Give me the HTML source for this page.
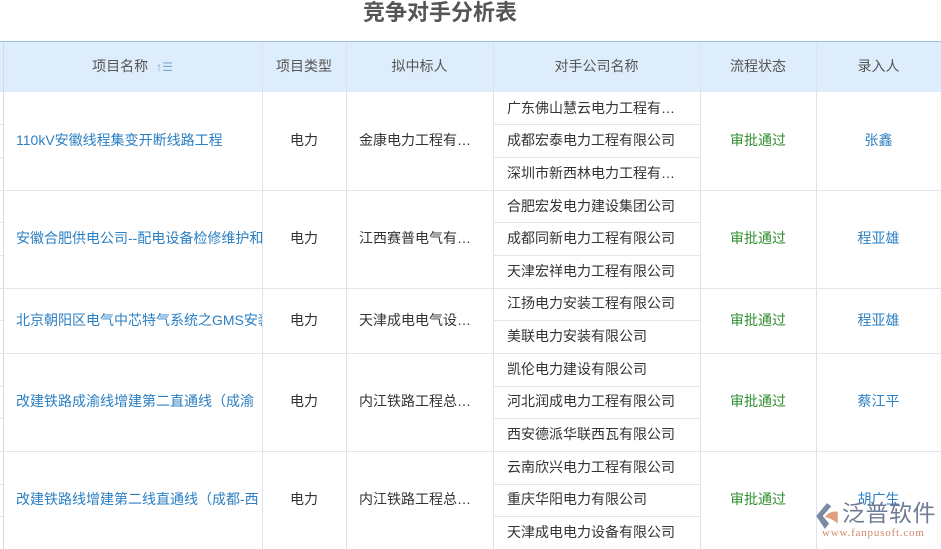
<!DOCTYPE html>
<html><head><meta charset="utf-8"><style>
*{margin:0;padding:0;box-sizing:border-box}
body{width:941px;height:549px;overflow:hidden;background:#fff;font-family:"Liberation Sans","Noto Sans CJK SC",sans-serif;font-size:14px;color:#333;position:relative}
.a{position:absolute}
.title{left:0;width:880px;top:0;text-align:center;font-size:22px;font-weight:bold;color:#555;line-height:26px}
.hdr{left:0;top:41px;width:941px;height:51px;background:#deedfb;border-top:1px solid #9cc0dd}
.hc{top:42px;height:50px;line-height:48px;text-align:center;color:#555}
.vl{width:1px;background:#dde3ea}
.hl{height:1px;background:#e3e6ea}
.c{text-align:center;white-space:nowrap;overflow:hidden}
.n{left:16px;width:246px;white-space:nowrap;overflow:hidden;color:#2b7fc3}
.co{left:507px;width:190px;white-space:nowrap;color:#333}
.g{color:#2f8f2f}.b{color:#2b7fc3}
.r{position:absolute;left:0;top:-2px;width:941px;height:549px}
</style></head><body>
<div class="a title">竞争对手分析表</div>
<div class="a hdr"></div>
<div class="a hc" style="left:3px;width:259px">项目名称 <span style="color:#7fa6cf;font-size:12px;margin-left:4px">↑☰</span></div>
<div class="a hc" style="left:262px;width:84px">项目类型</div>
<div class="a hc" style="left:346px;width:147px">拟中标人</div>
<div class="a hc" style="left:493px;width:207px">对手公司名称</div>
<div class="a hc" style="left:700px;width:116px">流程状态</div>
<div class="a hc" style="left:816px;width:125px">录入人</div>
<div class="a vl" style="left:3px;top:42px;height:507px;background:#cfdbe8"></div>
<div class="a vl" style="left:262px;top:42px;height:507px"></div>
<div class="a vl" style="left:346px;top:42px;height:507px"></div>
<div class="a vl" style="left:493px;top:42px;height:507px"></div>
<div class="a vl" style="left:700px;top:42px;height:507px"></div>
<div class="a vl" style="left:816px;top:42px;height:507px"></div>
<div class="a hl" style="left:0;width:941px;top:190px"></div>
<div class="a hl" style="left:0;width:941px;top:288px"></div>
<div class="a hl" style="left:0;width:941px;top:353px"></div>
<div class="a hl" style="left:0;width:941px;top:451px"></div>
<div class="a hl" style="left:493px;width:207px;top:124px"></div>
<div class="a hl" style="left:493px;width:207px;top:157px"></div>
<div class="a hl" style="left:493px;width:207px;top:222px"></div>
<div class="a hl" style="left:493px;width:207px;top:255px"></div>
<div class="a hl" style="left:493px;width:207px;top:320px"></div>
<div class="a hl" style="left:493px;width:207px;top:386px"></div>
<div class="a hl" style="left:493px;width:207px;top:418px"></div>
<div class="a hl" style="left:493px;width:207px;top:484px"></div>
<div class="a hl" style="left:493px;width:207px;top:516px"></div>
<div class="a hl" style="left:0;width:3px;top:124px"></div><div class="a hl" style="left:0;width:3px;top:157px"></div>
<div class="a hl" style="left:0;width:3px;top:222px"></div><div class="a hl" style="left:0;width:3px;top:255px"></div>
<div class="a hl" style="left:0;width:3px;top:320px"></div><div class="a hl" style="left:0;width:3px;top:386px"></div>
<div class="a hl" style="left:0;width:3px;top:418px"></div><div class="a hl" style="left:0;width:3px;top:484px"></div>
<div class="a hl" style="left:0;width:3px;top:516px"></div>

<div class="r">
<div class="a n" style="top:132px">110kV安徽线程集变开断线路工程</div>
<div class="a c" style="left:262px;width:84px;top:132px">电力</div>
<div class="a" style="left:359px;top:132px">金康电力工程有…</div>
<div class="a co" style="top:100px">广东佛山慧云电力工程有…</div>
<div class="a co" style="top:132px">成都宏泰电力工程有限公司</div>
<div class="a co" style="top:165px">深圳市新西林电力工程有…</div>
<div class="a c g" style="left:700px;width:116px;top:132px">审批通过</div>
<div class="a c b" style="left:816px;width:125px;top:132px">张鑫</div>
<div class="a n" style="top:230px">安徽合肥供电公司--配电设备检修维护和</div>
<div class="a c" style="left:262px;width:84px;top:230px">电力</div>
<div class="a" style="left:359px;top:230px">江西赛普电气有…</div>
<div class="a co" style="top:198px">合肥宏发电力建设集团公司</div>
<div class="a co" style="top:230px">成都同新电力工程有限公司</div>
<div class="a co" style="top:263px">天津宏祥电力工程有限公司</div>
<div class="a c g" style="left:700px;width:116px;top:230px">审批通过</div>
<div class="a c b" style="left:816px;width:125px;top:230px">程亚雄</div>
<div class="a n" style="top:312px">北京朝阳区电气中芯特气系统之GMS安装</div>
<div class="a c" style="left:262px;width:84px;top:312px">电力</div>
<div class="a" style="left:359px;top:312px">天津成电电气设…</div>
<div class="a co" style="top:295px">江扬电力安装工程有限公司</div>
<div class="a co" style="top:328px">美联电力安装有限公司</div>
<div class="a c g" style="left:700px;width:116px;top:312px">审批通过</div>
<div class="a c b" style="left:816px;width:125px;top:312px">程亚雄</div>
<div class="a n" style="top:393px">改建铁路成渝线增建第二直通线（成渝</div>
<div class="a c" style="left:262px;width:84px;top:393px">电力</div>
<div class="a" style="left:359px;top:393px">内江铁路工程总…</div>
<div class="a co" style="top:361px">凯伦电力建设有限公司</div>
<div class="a co" style="top:393px">河北润成电力工程有限公司</div>
<div class="a co" style="top:426px">西安德派华联西瓦有限公司</div>
<div class="a c g" style="left:700px;width:116px;top:393px">审批通过</div>
<div class="a c b" style="left:816px;width:125px;top:393px">蔡江平</div>
<div class="a n" style="top:491px">改建铁路线增建第二线直通线（成都-西</div>
<div class="a c" style="left:262px;width:84px;top:491px">电力</div>
<div class="a" style="left:359px;top:491px">内江铁路工程总…</div>
<div class="a co" style="top:459px">云南欣兴电力工程有限公司</div>
<div class="a co" style="top:491px">重庆华阳电力有限公司</div>
<div class="a co" style="top:524px">天津成电电力设备有限公司</div>
<div class="a c g" style="left:700px;width:116px;top:491px">审批通过</div>
<div class="a c b" style="left:816px;width:125px;top:491px">胡广生</div>
</div>
<svg class="a" style="left:811px;top:502px" width="32" height="28" viewBox="0 0 28 26">
<path d="M14 1 L4 13 L12 25 L16 20 L10 13 L18 4 Z" fill="#7a8aa6"/>
<path d="M12 14 Q16 8 24 9 L24 20 Q18 15 12 14 Z" fill="#e0a080"/>
</svg>
<div class="a" style="left:842px;top:499px;font-size:23px;color:#6f7c96;letter-spacing:0.5px;line-height:28px;white-space:nowrap">泛普软件</div>
<div class="a" style="left:822px;top:527px;font-size:11px;color:#d08a6a;font-family:'Liberation Serif',serif;letter-spacing:0.8px;white-space:nowrap">www.fanpusoft.com</div>
</body></html>
